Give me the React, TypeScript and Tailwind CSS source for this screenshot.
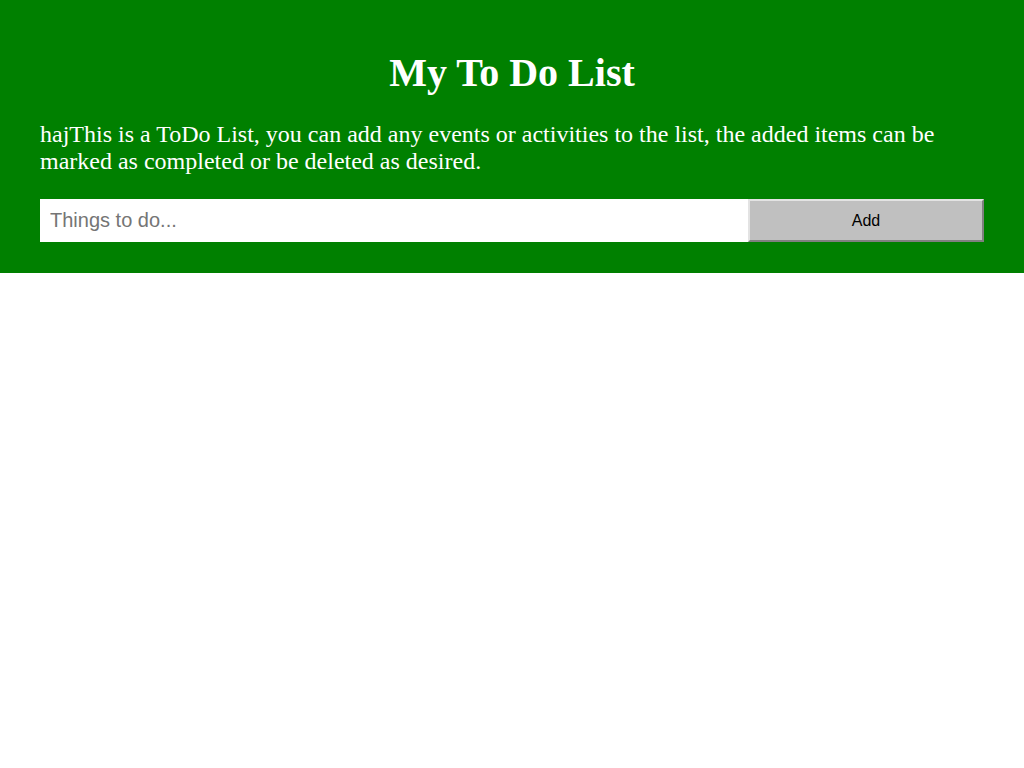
import React from "react";

export default function App() {
  return (
    <div className="min-h-[768px] bg-white">
      <header
        className="bg-[#008000] px-10 pt-[50px] pb-[31px] text-white"
        style={{ fontFamily: '"Liberation Serif", "Times New Roman", serif' }}
      >
        <h1 className="text-center text-[40px] leading-[46px] font-bold">My To Do List</h1>
        <p className="mt-[25px] text-[24px] leading-[27px]">
          hajThis is a ToDo List, you can add any events or activities to the list, the added items can be
          marked as completed or be deleted as desired.
        </p>
        <div className="mt-[24px] flex h-[43px]">
          <input
            type="text"
            placeholder="Things to do..."
            className="w-[75%] h-full bg-white px-[10px] text-[20px] text-black outline-none placeholder:text-[#757575]"
            style={{ fontFamily: '"Liberation Sans", Arial, sans-serif' }}
          />
          <button
            className="w-[25%] h-full bg-[#c0c0c0] text-[16px] text-black border-2 border-t-[#e3e3e3] border-l-[#e3e3e3] border-b-[#808080] border-r-[#808080]"
            style={{ fontFamily: '"Liberation Sans", Arial, sans-serif' }}
          >
            Add
          </button>
        </div>
      </header>
    </div>
  );
}
